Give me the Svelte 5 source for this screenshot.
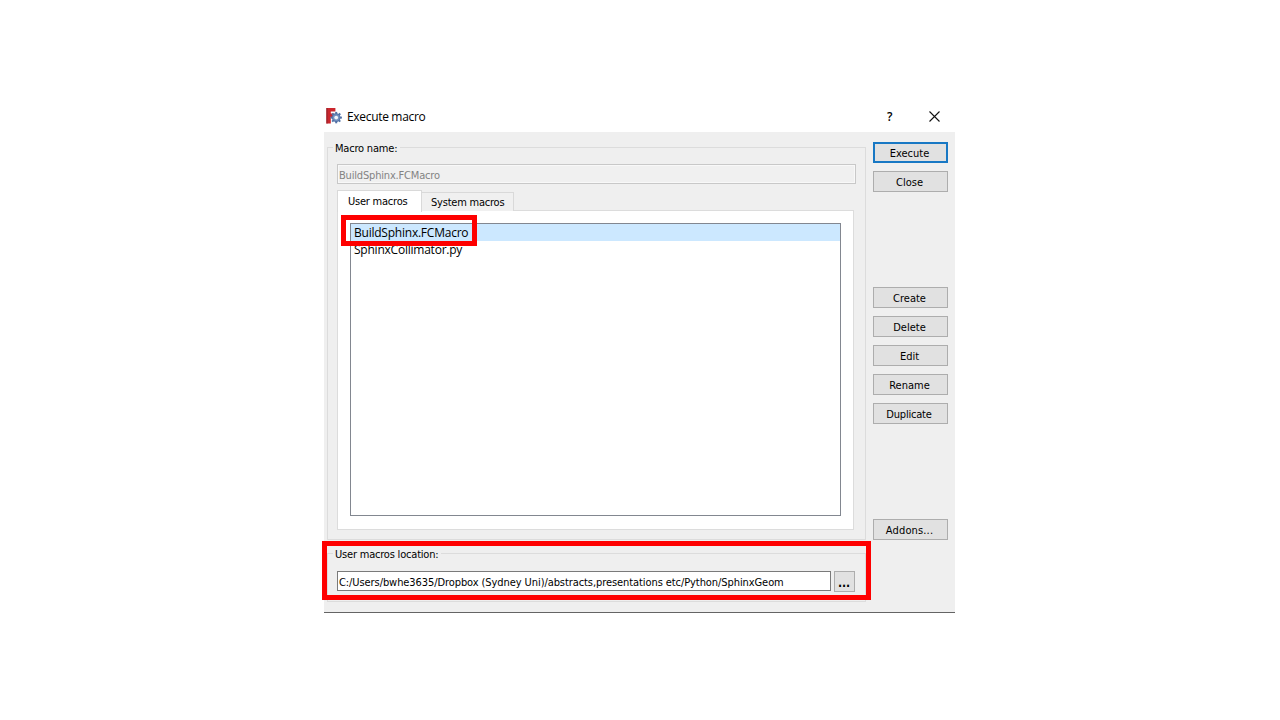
<script>
  const files = ['BuildSphinx.FCMacro', 'SphinxCollimator.py'];
  let selected = $state(0);
  let location = 'C:/Users/bwhe3635/Dropbox (Sydney Uni)/abstracts,presentations etc/Python/SphinxGeom';
</script>

<main>
  <section class="dialog">
    <header>
      <svg class="logo" width="16" height="16" viewBox="0 0 16 16">
        <path d="M.4 0H9.4V3.6H4.8V5.6H8.4V9.2H4.8V15.6H.4Z" fill="#cb262d" />
        <path d="M.4 0H1.6V15.6H.4Z" fill="#98262d" />
        <g fill="#5272a6">
          {#each [0, 45, 90, 135] as a}
            <rect x="9.2" y="3.9" width="2" height="11.4" transform="rotate({a} 10.2 9.6)" />
          {/each}
          <circle cx="10.2" cy="9.6" r="4.3" />
        </g>
        <circle cx="10.2" cy="9.6" r="3.4" fill="#7390bf" />
        <circle cx="10.2" cy="9.6" r="1.9" fill="#f2f5fa" />
      </svg>
      <span class="title">Execute macro</span>
      <span class="help">?</span>
      <svg class="close" width="11" height="11" viewBox="0 0 11 11"><path d="M.5.5 10.5 10.5M10.5.5.5 10.5" stroke="#111" stroke-width="1.1" /></svg>
    </header>
    <div class="body">
      <div class="left">
        <div class="group names">
          <span class="legend">Macro name:</span>
          <div class="field disabled">BuildSphinx.FCMacro</div>
          <div class="tabs">
            <div class="tab active">User macros</div>
            <div class="tab">System macros</div>
          </div>
          <div class="pane">
            <div class="list">
              {#each files as file, i}
                <div class="row" class:selected={selected === i}>{file}</div>
              {/each}
            </div>
          </div>
        </div>
        <div class="group place">
          <span class="legend">User macros location:</span>
          <div class="line">
            <div class="field path">{location}</div>
            <button class="dots">...</button>
          </div>
        </div>
      </div>
      <div class="buttons">
        <button class="default">Execute</button>
        <button>Close</button>
        <button class="gap1">Create</button>
        <button>Delete</button>
        <button>Edit</button>
        <button>Rename</button>
        <button class="dup">Duplicate</button>
        <button class="gap2">Addons...</button>
      </div>
    </div>
    <div class="mark m1"></div>
    <div class="mark m2"></div>
  </section>
</main>

<style>
  :global(body) { background: #fff; }
  main { height: 720px; padding: 101px 0 0 324px; box-sizing: border-box; overflow: hidden; }
  main * { box-sizing: border-box; }
  .dialog { position: relative; width: 631px; height: 512px; font: 11px/14px 'DejaVu Sans Condensed', 'DejaVu Sans', sans-serif; font-stretch: condensed; color: #000; white-space: nowrap; }
  header { height: 31px; display: flex; align-items: center; padding-left: 2px; background: #fff; }
  .logo { margin: 0 5px 1px 0; }
  .title { font: 12px/16px 'Open Sans', sans-serif; width: 540px; letter-spacing: -0.32px; }
  .help { font: 600 12px/16px 'Open Sans', sans-serif; width: 42px; }
  .close { flex: none; margin-bottom: 1px; }
  .body { height: 481px; background: #efefef; border-bottom: 1px solid #646464; display: flex; padding: 10px 7px 0 3px; justify-content: space-between; }
  .left { width: 539px; padding-top: 5px; }
  .group { position: relative; border: 1px solid #dcdcdc; padding: 0 9px; }
  .names { height: 393px; padding-top: 16px; }
  .place { height: 49px; margin-top: 13px; padding-top: 17px; }
  .legend { position: absolute; left: 5px; top: -6px; background: #efefef; padding: 0 3px 0 2px; letter-spacing: -.2px; }
  .field { height: 20px; background: #fff; border: 1px solid #7a7a7a; padding: 4px 0 0 1px; letter-spacing: -.08px; }
  .disabled { background: #f0f0f0; border-color: #c8c8c8; box-shadow: inset 0 0 0 1px #f8f8f8; color: #838383; width: 519px; letter-spacing: -.18px; }
  .tabs { display: flex; align-items: flex-end; height: 27px; letter-spacing: -.22px; }
  .tab { height: 19px; width: 93px; margin-left: -1px; border: 1px solid #d9d9d9; border-bottom: 0; background: #f0f0f0; padding: 3px 0 0 9px; }
  .tab.active { position: relative; z-index: 1; height: 22px; width: 85px; margin: 0 0 -1px; background: #fff; padding: 4px 0 0 10px; }
  .pane { width: 517px; height: 320px; border: 1px solid #dcdcdc; background: #fff; padding: 12px; margin-top: -1px; }
  .list { width: 491px; height: 293px; border: 1px solid #828790; background: #fff; font: 12px/17px 'Open Sans', sans-serif; letter-spacing: -.23px; }
  .row { height: 17px; padding-left: 3px; }
  .selected { background: #cce8ff; }
  .line { display: flex; gap: 3px; }
  .path { width: 494px; }
  button { display: block; font: inherit; color: #000; border: 1px solid #adadad; background: #e1e1e1; padding: 2px 0 0; margin: 0; text-align: center; }
  .dots { width: 21px; height: 21px; font-size: 12px; font-weight: 700; letter-spacing: -.1px; padding-right: 1px; }
  .buttons { width: 75px; display: flex; flex-direction: column; gap: 8px; }
  .buttons button { height: 21px; width: 75px; padding-right: 2px; }
  .buttons .dup { letter-spacing: -.2px; padding-right: 3px; }
  .buttons .default { border: 2px solid #1878c4; }
  .buttons .gap1 { margin-top: 87px; }
  .buttons .gap2 { margin-top: 87px; letter-spacing: .15px; }
  .mark { position: absolute; border: 5px solid #fe0000; }
  .m1 { left: 17px; top: 114px; width: 136px; height: 31px; }
  .m2 { left: -2px; top: 440px; width: 549px; height: 59px; }
</style>
